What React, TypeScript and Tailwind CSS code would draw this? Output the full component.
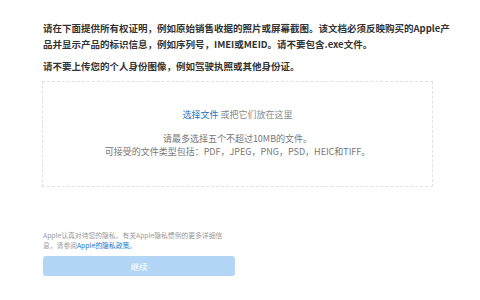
export default function App() {
  return (
    <div
      className="w-[480px] h-[300px] bg-white overflow-hidden pl-[43px] pt-[20px]"
      style={{ fontFamily: '"Noto Sans CJK SC", "Liberation Sans", sans-serif' }}
    >
      <div className="w-[392px] text-[9.5px] font-semibold text-[#333] leading-[16px] whitespace-nowrap">
        <p>
          请在下面提供所有权证明，例如原始销售收据的照片或屏幕截图。该文档必须反映购买的Apple产
          <br />
          品并显示产品的标识信息，例如序列号，IMEI或MEID。请不要包含.exe文件。
        </p>
        <p className="mt-[6px]">请不要上传您的个人身份图像，例如驾驶执照或其他身份证。</p>
      </div>

      <div className="-ml-px mt-[7px] w-[391px] h-[106px] border border-dashed border-[#e0e0e0] flex flex-col items-center text-center">
        <div className="mt-[26px] text-[9px] leading-[13px] text-[#888]">
          <span className="text-[#1a73c8]">选择文件</span> 或把它们放在这里
        </div>
        <div className="mt-[11px] text-[9px] leading-[13px] text-[#777]">
          <div>请最多选择五个不超过10MB的文件。</div>
          <div>可接受的文件类型包括：PDF，JPEG，PNG，PSD，HEIC和TIFF。</div>
        </div>
      </div>

      <div className="mt-[43px] text-[6.8px] leading-[10px] text-[#999] whitespace-nowrap">
        Apple认真对待您的隐私。有关Apple隐私惯例的更多详细信
        <br />
        息，请参阅<span className="text-[#1a73c8]">Apple的隐私政策。</span>
      </div>

      <button className="mt-[6px] w-[192px] h-[20px] rounded-[3px] bg-[#b4d6f6] text-white text-[8.5px] flex items-center justify-center">
        继续
      </button>
    </div>
  );
}
